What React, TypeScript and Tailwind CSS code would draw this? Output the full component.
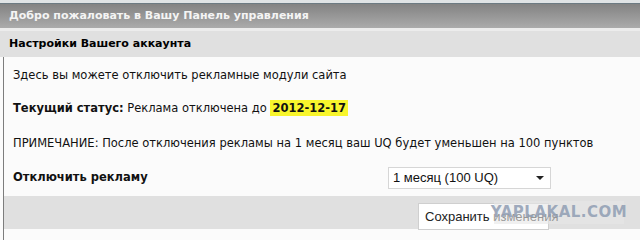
import React from "react";

const App = () => {
  return (
    <div className="w-[640px] h-[240px] overflow-hidden bg-[#fbfbfb] relative font-['DejaVu_Sans',Verdana,sans-serif] text-[11.5px] text-[#111]">
      <div className="h-[3px] bg-[#dfe3e5]" />
      <div className="h-[1px] bg-[#6c7a82]" />
      <div className="h-[24px] bg-gradient-to-b from-[#838383] to-[#ababab] flex items-center pl-[9px] text-[#f4f4f4] font-bold text-[11px]">
        Добро пожаловать в Вашу Панель управления
      </div>
      <div className="h-[3px] bg-[#ececec]" />
      <div className="h-[26px] bg-[#e0e0e0] flex items-center pl-[9px] font-bold text-[11px] text-black">
        Настройки Вашего аккаунта
      </div>
      <div className="ml-[3px] border-l border-[#7d7d7d] h-[183px] flex flex-col">
        <div className="pl-[9px] pt-[11px] flex flex-col">
          <div className="h-[14px] leading-[14px]">Здесь вы можете отключить рекламные модули сайта</div>
          <div className="h-[14px] leading-[14px] mt-[19px]">
            <b>Текущий статус:</b> Реклама отключена до{" "}
            <b className="bg-[#f8f52c] px-[2px] py-[1px]">2012-12-17</b>
          </div>
          <div className="h-[14px] leading-[14px] mt-[21px]">
            ПРИМЕЧАНИЕ: После отключения рекламы на 1 месяц ваш UQ будет уменьшен на 100 пунктов
          </div>
          <div className="flex items-center mt-[17px] h-[22px]">
            <b className="w-[375px]">Отключить рекламу</b>
            <div className="w-[163px] h-[22px] bg-white border border-[#d6d6d6] flex items-center justify-between px-[4px] font-['Liberation_Sans',Arial,sans-serif] text-[13px]">
              <span>1 месяц (100 UQ)</span>
              <span className="w-0 h-0 border-l-[4px] border-r-[4px] border-t-[4px] border-l-transparent border-r-transparent border-t-[#222] mr-[2px]" />
            </div>
          </div>
        </div>
        <div className="mt-[7px] h-[33px] bg-[#e0e0e0] flex items-end justify-end pr-[91px]">
          <div className="w-[131px] h-[27px] -mb-[1px] bg-white border border-[#cfcfcf] flex items-center pl-[6px] whitespace-nowrap font-['Liberation_Sans',Arial,sans-serif] text-[13px] text-[#222]">
            Сохранить изменения
          </div>
        </div>
      </div>
      <div className="absolute left-[494px] top-[201px] w-[130px] h-[23px] bg-[#e6e6e6]/60 flex items-center justify-center font-['DejaVu_Sans',sans-serif] font-bold text-[15px] text-[#8f9db3]/85 tracking-[0.5px]">
        YAPLAKAL.COM
      </div>
    </div>
  );
};

export default App;
